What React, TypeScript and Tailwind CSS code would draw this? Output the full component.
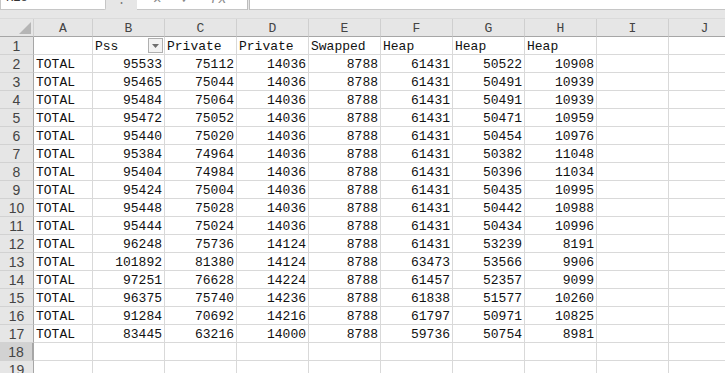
import React from "react";

const data: number[][] = [
  [95533, 75112, 14036, 8788, 61431, 50522, 10908],
  [95465, 75044, 14036, 8788, 61431, 50491, 10939],
  [95484, 75064, 14036, 8788, 61431, 50491, 10939],
  [95472, 75052, 14036, 8788, 61431, 50471, 10959],
  [95440, 75020, 14036, 8788, 61431, 50454, 10976],
  [95384, 74964, 14036, 8788, 61431, 50382, 11048],
  [95404, 74984, 14036, 8788, 61431, 50396, 11034],
  [95424, 75004, 14036, 8788, 61431, 50435, 10995],
  [95448, 75028, 14036, 8788, 61431, 50442, 10988],
  [95444, 75024, 14036, 8788, 61431, 50434, 10996],
  [96248, 75736, 14124, 8788, 61431, 53239, 8191],
  [101892, 81380, 14124, 8788, 63473, 53566, 9906],
  [97251, 76628, 14224, 8788, 61457, 52357, 9099],
  [96375, 75740, 14236, 8788, 61838, 51577, 10260],
  [91284, 70692, 14216, 8788, 61797, 50971, 10825],
  [83445, 63216, 14000, 8788, 59736, 50754, 8981],
];

const letters = ["A", "B", "C", "D", "E", "F", "G", "H", "I", "J"];
const heads = ["", "Pss", "Private", "Private", "Swapped", "Heap", "Heap", "Heap", "", ""];

const cell = "h-[18px] pt-[2px] border-r border-b border-[#d9d9d9] bg-white flex items-center overflow-hidden whitespace-nowrap";
const rowHead = "h-[18px] pt-[2px] border-r border-b border-r-[#a6a6a6] border-b-[#d2d2d2] flex items-center justify-center text-[14px] text-[#444] font-['Liberation_Sans',sans-serif]";

export default function App() {
  return (
    <div className="w-[725px] h-[373px] overflow-hidden bg-white font-['Liberation_Mono',monospace] text-[13px] text-[#111]">
      {/* formula bar, mostly scrolled out of view */}
      <div className="h-[19px] bg-[#e6e6e6] border-b border-[#dadada] flex items-start">
        <div className="w-[106px] h-[10px] bg-white border border-t-0 border-[#c6c6c6] rounded-br-[2px] overflow-hidden">
          <div className="-mt-[11px] pl-[5px] leading-[18px] text-[12px] text-[#333]">K18</div>
        </div>
        <div className="w-[31px] h-[10px] flex justify-center">
          <span className="-mt-[9px] leading-[16px] text-[13px] text-[#777]">⋮</span>
        </div>
        <div className="w-[110px] h-[10px] bg-white border-b border-[#c6c6c6] overflow-hidden flex gap-[20px] pl-[16px]">
          <span className="-mt-[9px] leading-[16px] text-[14px] text-[#8a8a8a]">✕</span>
          <span className="-mt-[9px] leading-[16px] text-[14px] text-[#8a8a8a]">✓</span>
          <span className="-mt-[9px] leading-[16px] text-[14px] text-[#8a8a8a] italic">fx</span>
        </div>
        <div className="w-[3px] h-[10px] border-x border-[#bdbdbd]" />
        <div className="flex-1 h-[10px] bg-white border-b border-[#c6c6c6]" />
      </div>

      <div className="grid grid-cols-[34px_59px_repeat(9,72px)]">
        {/* column header row */}
        <div className="h-[18px] bg-[#e6e6e6] border-r border-b border-[#a6a6a6] border-r-[#d0d0d0] flex items-end justify-end pr-[2px] pb-[2px]">
          <svg width="12" height="12" viewBox="0 0 12 12">
            <polygon points="12,0 12,12 0,12" fill="#b5b5b5" />
          </svg>
        </div>
        {letters.map((l) => (
          <div
            key={l}
            className="h-[18px] pt-[2px] bg-[#e6e6e6] border-r border-b border-r-[#cfcfcf] border-b-[#a6a6a6] flex items-center justify-center text-[#444]"
          >
            {l}
          </div>
        ))}

        {/* row 1: headings */}
        <div className={`${rowHead} bg-[#e6e6e6]`}>1</div>
        {heads.map((h, i) => (
          <div key={i} className={`${cell} pl-[2px] relative`}>
            {h}
            {i === 1 && (
              <div className="absolute right-[1px] top-[1px] w-[15px] h-[15px] border border-[#b0b0b0] bg-[#f3f3f3] flex items-center justify-center">
                <svg width="7" height="4" viewBox="0 0 7 4">
                  <polygon points="0,0 7,0 3.5,4" fill="#6f6f6f" />
                </svg>
              </div>
            )}
          </div>
        ))}

        {/* data rows */}
        {data.map((r, ri) => (
          <React.Fragment key={ri}>
            <div className={`${rowHead} bg-[#e6e6e6]`}>{ri + 2}</div>
            <div className={`${cell} pl-[2px]`}>TOTAL</div>
            {r.map((v, ci) => (
              <div key={ci} className={`${cell} justify-end pr-[2px]`}>
                {v}
              </div>
            ))}
            <div className={cell} />
            <div className={cell} />
          </React.Fragment>
        ))}

        {/* selected row 18 and row 19 */}
        <div className={`${rowHead} bg-[#d2d2d2] border-r-[2px] border-r-[#217346]`}>18</div>
        {letters.map((l) => (
          <div key={l} className={cell} />
        ))}
        <div className={`${rowHead} bg-[#e6e6e6]`}>19</div>
        {letters.map((l) => (
          <div key={l} className={cell} />
        ))}
      </div>
    </div>
  );
}
